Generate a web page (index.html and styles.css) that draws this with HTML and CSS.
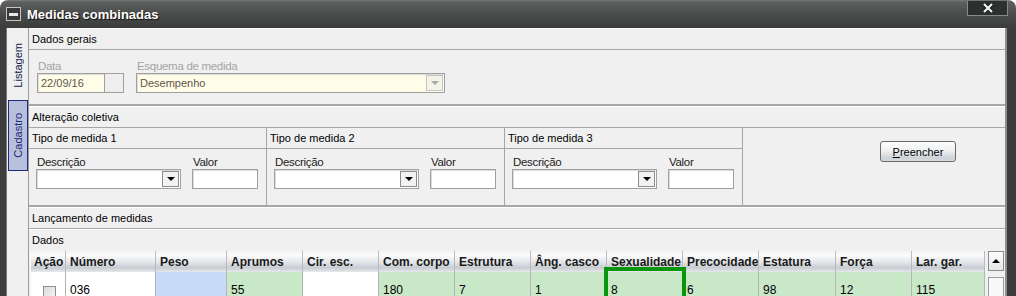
FILE: index.html
```html
<!DOCTYPE html>
<html lang="pt">
<head>
  <meta charset="UTF-8">
  <title>Medidas combinadas</title>
  <link rel="stylesheet" href="styles.css">
</head>
<body>

  <div class="window">
    <div class="titlebar">
      <span class="min-btn"><span></span></span>
      <span class="title">Medidas combinadas</span>
      <span class="close-btn">
        <svg width="12" height="10" viewBox="0 0 12 10">
          <path d="M2 1 L10 9 M10 1 L2 9" stroke="#1a1a1a" stroke-width="4" />
          <path d="M2 1 L10 9 M10 1 L2 9" stroke="#f4f4f4" stroke-width="2.2" />
        </svg>
      </span>
    </div>

    <div class="frame">
      <div class="side-tabs">
        <div class="side-tab"><span>Listagem</span></div>
        <div class="side-tab active"><span>Cadastro</span></div>
      </div>

      <div class="content">

        <div class="section">
          <div class="section-head">Dados gerais</div>
          <div class="general">
            <div class="field">
              <label class="lbl disabled">Data</label>
              <div class="date-row">
                <div class="input ro date">22/09/16</div>
                <div class="date-btn"></div>
              </div>
            </div>
            <div class="field">
              <label class="lbl disabled">Esquema de medida</label>
              <div class="input ro combo scheme">Desempenho<span class="arrow off"></span></div>
            </div>
          </div>
        </div>

        <div class="section">
          <div class="section-head">Alteração coletiva</div>
          <div class="tipos">
            <div class="tipo">
              <div class="tipo-head">Tipo de medida 1</div>
              <div class="tipo-body">
                <div class="field">
                  <label class="lbl">Descrição</label>
                  <div class="input combo desc"><span class="arrow"></span></div>
                </div>
                <div class="field">
                  <label class="lbl">Valor</label>
                  <div class="input valor"></div>
                </div>
              </div>
            </div>
            <div class="tipo">
              <div class="tipo-head">Tipo de medida 2</div>
              <div class="tipo-body">
                <div class="field">
                  <label class="lbl">Descrição</label>
                  <div class="input combo desc"><span class="arrow"></span></div>
                </div>
                <div class="field">
                  <label class="lbl">Valor</label>
                  <div class="input valor"></div>
                </div>
              </div>
            </div>
            <div class="tipo">
              <div class="tipo-head">Tipo de medida 3</div>
              <div class="tipo-body">
                <div class="field">
                  <label class="lbl">Descrição</label>
                  <div class="input combo desc"><span class="arrow"></span></div>
                </div>
                <div class="field">
                  <label class="lbl">Valor</label>
                  <div class="input valor"></div>
                </div>
              </div>
            </div>
            <div class="fill-col">
              <button class="btn"><u>P</u>reencher</button>
            </div>
          </div>
        </div>

        <div class="section last">
          <div class="section-head">Lançamento de medidas</div>
          <div class="dados">
            <div class="dados-head">Dados</div>
            <div class="grid-wrap">
              <table class="grid">
                <colgroup>
                  <col style="width:35px"><col style="width:90px"><col style="width:71px">
                  <col style="width:76px"><col style="width:76px"><col style="width:76px">
                  <col style="width:76px"><col style="width:76px"><col style="width:76px">
                  <col style="width:76px"><col style="width:77px"><col style="width:76px">
                  <col style="width:73px">
                </colgroup>
                <thead>
                  <tr>
                    <th>Ação</th><th>Número</th><th>Peso</th><th>Aprumos</th><th>Cir. esc.</th>
                    <th>Com. corpo</th><th>Estrutura</th><th>Âng. casco</th><th>Sexualidade</th>
                    <th>Precocidade</th><th>Estatura</th><th>Força</th><th>Lar. gar.</th>
                  </tr>
                </thead>
                <tbody>
                  <tr>
                    <td class="check-cell"><span class="checkbox"></span></td>
                    <td>036</td>
                    <td class="blue"></td>
                    <td class="green">55</td>
                    <td></td>
                    <td class="green">180</td>
                    <td class="green">7</td>
                    <td class="green">1</td>
                    <td class="green sel">8</td>
                    <td class="green">6</td>
                    <td class="green">98</td>
                    <td class="green">12</td>
                    <td class="green">115</td>
                  </tr>
                </tbody>
              </table>
              <div class="vscroll">
                <div class="scroll-up"><span></span></div>
                <div class="scroll-thumb"></div>
              </div>
            </div>
          </div>
        </div>

      </div>
    </div>
  </div>

</body>
</html>
```

FILE: styles.css
```css
* {
  box-sizing: border-box;
}

body {
  margin: 0;
  background: #fff;
  font-family: "Liberation Sans", Arial, sans-serif;
  font-size: 11px;
  color: #000;
}

.window {
  width: 1016px;
  height: 296px;
  overflow: hidden;
}

/* title bar */

.titlebar {
  height: 28px;
  display: flex;
  align-items: center;
  padding-left: 6px;
  border-radius: 8px 8px 0 0;
  background: linear-gradient(#7a7a7a 0, #5e6060 2px, #525454 9px, #464848 18px, #3b3d3d 100%);
}

.min-btn {
  width: 15px;
  height: 14px;
  border: 1px solid #c4c4c4;
  background: #3a3a3a;
  display: flex;
  align-items: center;
  justify-content: center;
}

.min-btn span {
  width: 9px;
  height: 3px;
  background: #e8e8e8;
}

.title {
  margin-left: 6px;
  font-size: 13px;
  font-weight: bold;
  color: #fff;
  text-shadow: 1px 1px 1px #111;
}

.close-btn {
  margin-left: auto;
  margin-right: 8px;
  align-self: flex-start;
  margin-top: 1px;
  width: 41px;
  height: 15px;
  background: #2c3030;
  border: 1px solid #8a8a8a;
  border-top: none;
  display: flex;
  align-items: center;
  justify-content: center;
}

/* frame and side tabs */

.frame {
  display: flex;
  height: 268px;
  background: #3c3c3c;
  padding: 0 9px 0 6px;
}

.side-tabs {
  width: 23px;
  background: #f0f0f0;
  border-left: 1px solid #777;
}

.side-tab {
  height: 72px;
  display: flex;
  align-items: center;
  justify-content: center;
  padding-top: 3px;
  color: #141c4a;
}

.side-tab span {
  writing-mode: vertical-rl;
  transform: rotate(180deg);
}

.side-tab.active {
  width: 20px;
  height: 71px;
  margin-left: 1px;
  padding-top: 0;
  background: #b9c0db;
  border: 1px solid #1c2a80;
  color: #1c2a80;
}

.content {
  flex: 1;
  background: #f0f0f0;
  border-left: 1px solid #9c9c9c;
  border-right: 2px solid #8e8e8e;
}

/* sections */

.section {
  border-top: 1px solid #fff;
  border-bottom: 2px solid #a6a6a6;
}

.section.last {
  border-bottom: none;
}

.section-head {
  height: 21px;
  line-height: 20px;
  padding-left: 3px;
  border-bottom: 1px solid #a6a6a6;
}

.general {
  height: 54px;
  display: flex;
  gap: 12px;
  padding-left: 8px;
}

.lbl {
  display: block;
  height: 13px;
  line-height: 13px;
  margin-top: 10px;
  padding-left: 1px;
  font-size: 11.5px;
  letter-spacing: -0.3px;
  color: #222;
}

.lbl.disabled {
  color: #a4a4a4;
}

.input {
  height: 20px;
  line-height: 18px;
  padding-left: 3px;
  background: #fff;
  border: 1px solid #a0a0a0;
  box-shadow: inset 1px 1px 0 #dcdcdc;
  position: relative;
}

.input.ro {
  background: #fffde8;
  color: #5e5848;
}

.date-row {
  display: flex;
}

.date {
  width: 68px;
}

.date-btn {
  width: 19px;
  height: 20px;
  border: 1px solid #a0a0a0;
  border-left: none;
  background: #eeeeee;
}

.scheme {
  width: 309px;
}

.combo .arrow {
  position: absolute;
  right: 1px;
  top: 1px;
  width: 17px;
  height: 16px;
  border: 1px solid #8c8c8c;
  background: #f2f2f2;
}

.combo .arrow::after {
  content: "";
  position: absolute;
  left: 4px;
  top: 5px;
  border-left: 4px solid transparent;
  border-right: 4px solid transparent;
  border-top: 4px solid #000;
}

.combo .arrow.off {
  border-color: #c4c4c4;
  background: #f4f3e8;
}

.combo .arrow.off::after {
  border-top-color: #a8a8a8;
}

/* alteração coletiva */

.tipos {
  display: flex;
  height: 77px;
}

.tipo {
  width: 238px;
  border-right: 1px solid #a6a6a6;
}

.tipo-head {
  height: 21px;
  line-height: 20px;
  padding-left: 3px;
  border-bottom: 1px solid #a6a6a6;
}

.tipo-body {
  display: flex;
  gap: 11px;
  padding: 0 7px;
}

.tipo-body .lbl {
  margin-top: 7px;
}

.desc {
  width: 145px;
}

.valor {
  width: 66px;
}

.fill-col {
  flex: 1;
  padding: 13px 0 0 137px;
}

.btn {
  width: 76px;
  height: 21px;
  padding: 0;
  font-family: "Liberation Sans", Arial, sans-serif;
  font-size: 11px;
  color: #000;
  border: 1px solid #6a6a6a;
  border-radius: 3px;
  background: linear-gradient(#fdfdfd 0%, #eef0f2 45%, #cdd2d8 85%, #d8dce0 100%);
}

/* grid */

.dados {
  border-top: 1px solid #fff;
  padding-left: 1px;
}

.dados-head {
  height: 21px;
  line-height: 21px;
  padding-left: 2px;
}

.grid-wrap {
  display: flex;
}

.grid {
  border-collapse: collapse;
  table-layout: fixed;
  width: 954px;
}

.grid th {
  height: 21px;
  padding: 0 0 0 4px;
  text-align: left;
  font-size: 12px;
  font-weight: bold;
  color: #1a1a1a;
  white-space: nowrap;
  overflow: hidden;
  border-left: 1px solid #fafafa;
  border-right: 1px solid #b8bcc2;
  background: linear-gradient(#f2f2f2 0%, #fbfbfb 20%, #e6e8eb 50%, #c8ccd1 80%, #e6e8ea 100%);
}

.grid th:first-child {
  padding-left: 3px;
}

.grid td {
  height: 24px;
  padding: 0 0 0 4px;
  font-size: 12px;
  background: #fff;
  border-right: 1px solid #b4b4b4;
}

.grid td.green {
  background: #c8e8c8;
}

.grid td.blue {
  background: #c6dbf7;
}

.grid td.sel {
  position: relative;
}

.grid td.sel::after {
  content: "";
  position: absolute;
  left: -3px;
  top: -5px;
  right: -4px;
  bottom: -4px;
  border: 4px solid #08960a;
}

.check-cell {
  text-align: center;
}

.checkbox {
  display: inline-block;
  width: 13px;
  height: 13px;
  margin-top: 5px;
  border: 1px solid #8f8f8f;
  background: linear-gradient(135deg, #d8dadc, #f6f6f6);
  vertical-align: top;
}

.vscroll {
  width: 20px;
  background: #f0f0f0;
  padding-left: 3px;
}

.scroll-up {
  width: 16px;
  height: 20px;
  border: 1px solid #8c8c8c;
  background: linear-gradient(#fdfdfd, #e6e6e6);
  display: flex;
  align-items: center;
  justify-content: center;
}

.scroll-up span {
  border-left: 4px solid transparent;
  border-right: 4px solid transparent;
  border-bottom: 4px solid #000;
}

.scroll-thumb {
  width: 16px;
  height: 30px;
  margin-top: 6px;
  border: 1px solid #9c9c9c;
  background: #f8f8f8;
}
```
